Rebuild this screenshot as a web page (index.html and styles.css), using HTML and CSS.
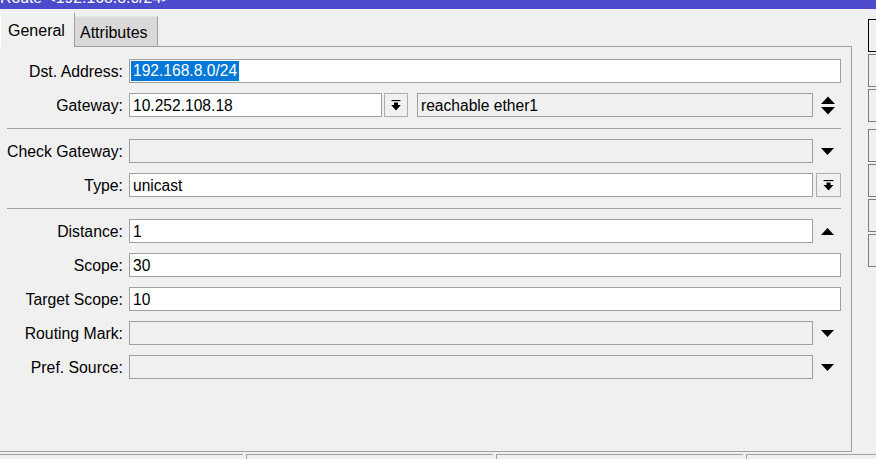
FILE: index.html
```html
<!DOCTYPE html>
<html>
<head>
<meta charset="utf-8">
<link rel="stylesheet" href="styles.css">
</head>
<body>
<div class="titlebar"><span class="title">Route &lt;192.168.8.0/24&gt;</span></div>
<div class="content">
  <div class="main">
    <div class="tabs">
      <div class="tab active">General</div>
      <div class="tab inactive">Attributes</div>
    </div>
    <div class="panel">
      <div class="form">
        <div class="row">
          <div class="label">Dst. Address:</div>
          <div class="field"><span class="sel">192.168.8.0/24</span></div>
        </div>
        <div class="row">
          <div class="label">Gateway:</div>
          <div class="field gw">10.252.108.18</div>
          <div class="dd gwbtn"><svg width="10" height="11" viewBox="0 0 10 11"><path d="M0.5 0.5H9.5" stroke="#000" stroke-width="1.2"/><path d="M3 2.5H7V5H9.8L5 10.5L0.2 5H3Z"/></svg></div>
          <div class="field disabled gwstate">reachable ether1</div>
          <div class="arrow"><svg width="16" height="19" viewBox="0 0 16 19"><path d="M8 0.5L15 8H1Z"/><path d="M1 11H15L8 18.5Z"/></svg></div>
        </div>
        <div class="sep"></div>
        <div class="row">
          <div class="label">Check Gateway:</div>
          <div class="field disabled"></div>
          <div class="arrow"><svg width="13" height="7" viewBox="0 0 13 7"><path d="M0 0H13L6.5 7Z"/></svg></div>
        </div>
        <div class="row">
          <div class="label">Type:</div>
          <div class="field">unicast</div>
          <div class="dd typebtn"><svg width="11" height="11" viewBox="0 0 11 11"><path d="M0.5 0.5H10.5" stroke="#000" stroke-width="1.2"/><path d="M3.5 2.5H7.5V5H10.5L5.5 10.5L0.5 5H3.5Z"/></svg></div>
        </div>
        <div class="sep"></div>
        <div class="row">
          <div class="label">Distance:</div>
          <div class="field">1</div>
          <div class="arrow"><svg width="13" height="7" viewBox="0 0 13 7"><path d="M0 7H13L6.5 0Z"/></svg></div>
        </div>
        <div class="row">
          <div class="label">Scope:</div>
          <div class="field">30</div>
        </div>
        <div class="row">
          <div class="label">Target Scope:</div>
          <div class="field">10</div>
        </div>
        <div class="row">
          <div class="label">Routing Mark:</div>
          <div class="field disabled"></div>
          <div class="arrow"><svg width="13" height="7" viewBox="0 0 13 7"><path d="M0 0H13L6.5 7Z"/></svg></div>
        </div>
        <div class="row">
          <div class="label">Pref. Source:</div>
          <div class="field disabled"></div>
          <div class="arrow"><svg width="13" height="7" viewBox="0 0 13 7"><path d="M0 0H13L6.5 7Z"/></svg></div>
        </div>
      </div>
    </div>
  </div>
  <div class="side">
    <div class="btn default"></div>
    <div class="btn"></div>
    <div class="btn group-end"></div>
    <div class="btn"></div>
    <div class="btn"></div>
    <div class="btn"></div>
    <div class="btn"></div>
  </div>
</div>
<div class="statusbar">
  <div class="seg first"></div>
  <div class="seg"></div>
  <div class="seg"></div>
  <div class="seg last"></div>
</div>
</body>
</html>
```

FILE: styles.css
```css
html, body {
  margin: 0;
  padding: 0;
}
body {
  width: 876px;
  height: 459px;
  overflow: hidden;
  background: #f0f0f0;
  font-family: "Liberation Sans", Arial, sans-serif;
  font-size: 15.6px;
  color: #000;
}
.titlebar {
  height: 9px;
  background: #4b4bcb;
  overflow: hidden;
  color: #fff;
}
.title {
  display: block;
  line-height: 18px;
  margin-top: -11px;
  white-space: nowrap;
  font-size: 15.8px;
}
.content {
  display: flex;
  height: 443px;
}
.main {
  width: 852px;
  display: flex;
  flex-direction: column;
  flex: none;
}
.tabs {
  height: 37px;
  display: flex;
  align-items: flex-end;
  flex: none;
}
.tab {
  box-sizing: border-box;
  line-height: 17px;
  font-size: 16px;
  white-space: nowrap;
}
.tab.active {
  width: 75px;
  height: 35px;
  margin-bottom: -1px;
  position: relative;
  z-index: 1;
  background: #f0f0f0;
  border-top: 1px solid #ffffff;
  border-left: 1px solid #ffffff;
  border-right: 1px solid #a0a0a0;
  padding: 9px 0 0 7px;
}
.tab.inactive {
  width: 83px;
  height: 30px;
  background: #d9d9d9;
  border-top: 1px solid #e6e6e6;
  border-right: 1px solid #a0a0a0;
  padding: 7px 0 0 5px;
}
.panel {
  flex: 1;
  border-top: 1px solid #a0a0a0;
  border-right: 1px solid #a0a0a0;
  border-bottom: 1px solid #a0a0a0;
  padding: 12px 10px 0 0;
}
.form {
  display: flex;
  flex-direction: column;
  gap: 10px;
}
.row {
  display: flex;
  align-items: center;
  height: 24px;
}
.label {
  width: 123px;
  margin-right: 6px;
  text-align: right;
  white-space: nowrap;
  font-size: 15.8px;
  flex: none;
  padding-top: 2px;
}
.field {
  flex: 1;
  height: 24px;
  box-sizing: border-box;
  border: 1px solid #a0a0a0;
  background: #fff;
  padding: 1px 0 0 3px;
  line-height: 22px;
  white-space: nowrap;
  overflow: hidden;
}
.field.disabled {
  background: #f0f0f0;
}
.field.gw {
  flex: none;
  width: 253px;
}
.field.gwstate {
  margin-left: 9px;
}
.sel {
  display: inline-block;
  background: #0078d7;
  color: #fff;
  margin-left: -2px;
  padding: 0 2px;
  line-height: 20px;
  vertical-align: top;
}
.dd {
  flex: none;
  height: 24px;
  box-sizing: border-box;
  border: 1px solid #adadad;
  background: #f0f0f0;
  display: flex;
  align-items: center;
  justify-content: center;
}
.gwbtn {
  width: 24px;
  margin-left: 2px;
}
.typebtn {
  width: 25px;
  margin-left: 3px;
}
.arrow {
  flex: none;
  width: 28px;
  height: 24px;
  display: flex;
  align-items: center;
  justify-content: center;
  padding-left: 1px;
  box-sizing: border-box;
}
.sep {
  height: 1px;
  background: #a0a0a0;
  margin: 1px 0 0 7px;
}
.side {
  margin-left: 16px;
  padding-top: 10px;
  display: flex;
  flex-direction: column;
  gap: 2px;
}
.btn {
  width: 40px;
  height: 33px;
  box-sizing: border-box;
  border: 1px solid #7a7a7a;
  background: #f0f0f0;
}
.btn.default {
  border-color: #000;
}
.btn.group-end {
  margin-bottom: 5px;
}
.statusbar {
  display: flex;
  gap: 3px;
  margin-top: 2px;
  height: 5px;
}
.seg {
  width: 247px;
  border-top: 1px solid #a0a0a0;
  border-left: 1px solid #a0a0a0;
  box-sizing: border-box;
}
.seg.first {
  width: 243px;
  border-left: none;
}
.seg.last {
  flex: 1;
}
```
